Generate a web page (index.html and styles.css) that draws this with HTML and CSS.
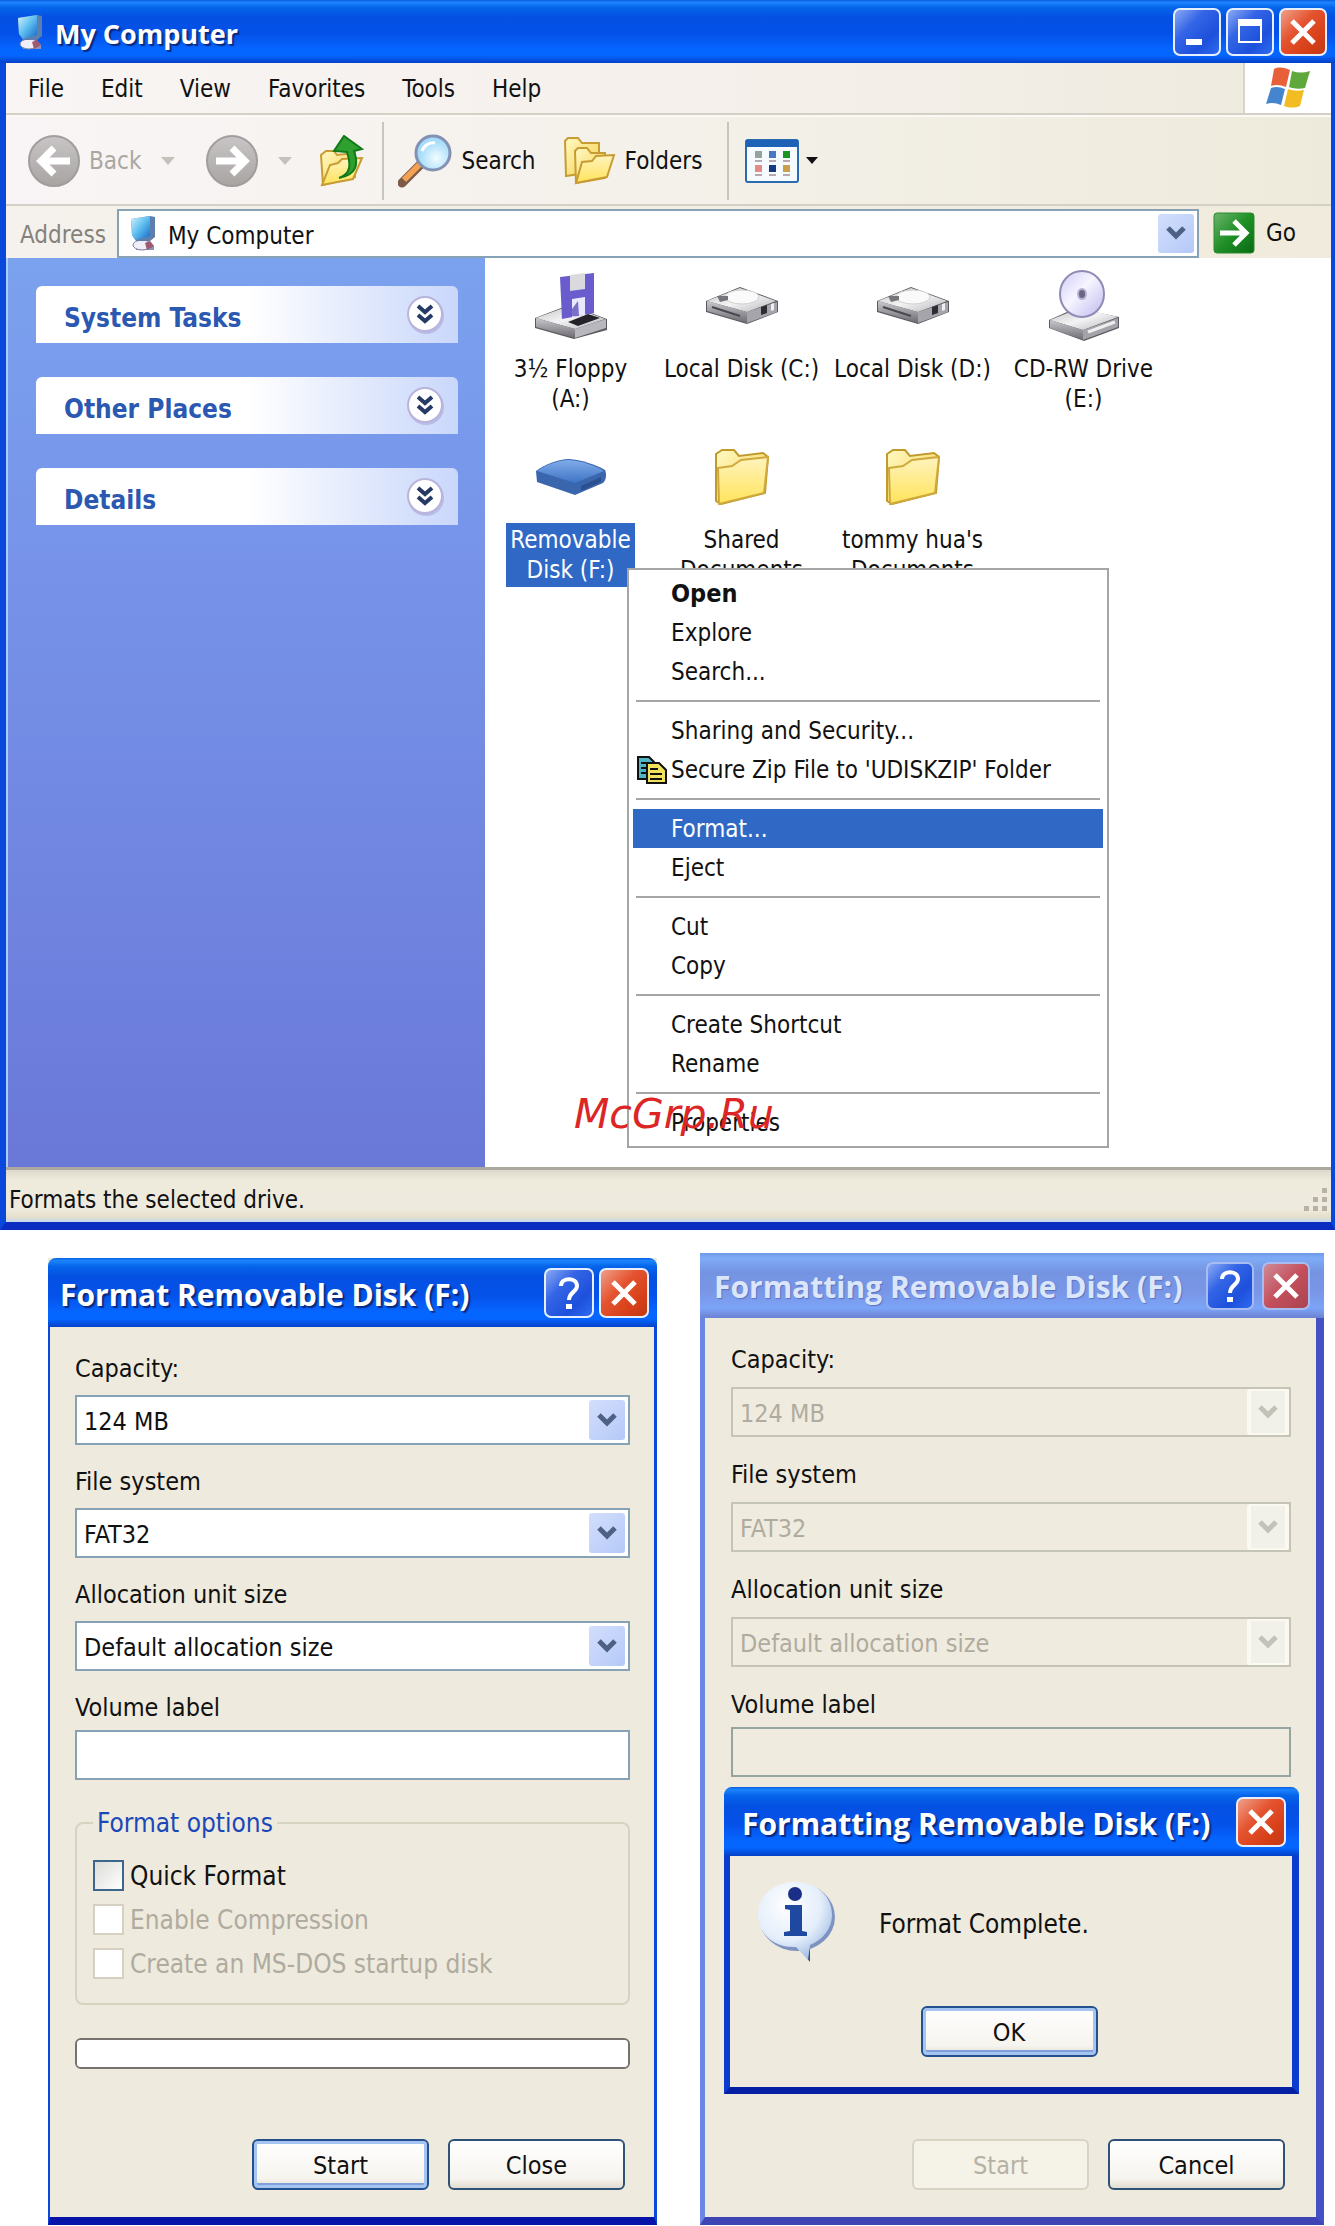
FILE: index.html
```html
<!DOCTYPE html>
<html lang="en">
<head>
<meta charset="utf-8">
<title>My Computer</title>
<meta name="viewport" content="width=device-width, initial-scale=1">
<link rel="stylesheet" href="styles.css">
</head>
<body>
<svg class="defs" width="0" height="0" aria-hidden="true">
  <defs>
    <linearGradient id="g-screen" x1="0" y1="0" x2="1" y2="1"><stop offset="0" stop-color="#d4f4fc"/><stop offset=".5" stop-color="#5cbdf0"/><stop offset="1" stop-color="#1565c4"/></linearGradient>
    <linearGradient id="g-gray" x1="0" y1="0" x2="0" y2="1"><stop offset="0" stop-color="#c9c5c6"/><stop offset="1" stop-color="#a7a4a2"/></linearGradient>
    <linearGradient id="g-folder" x1="0" y1="0" x2="1" y2="1"><stop offset="0" stop-color="#fff9c4"/><stop offset="1" stop-color="#f6cf48"/></linearGradient>
    <linearGradient id="g-front" x1="0" y1="0" x2="0" y2="1"><stop offset="0" stop-color="#fff3bd"/><stop offset="1" stop-color="#ffe45a"/></linearGradient>
    <linearGradient id="g-metal" x1="0" y1="0" x2="1" y2="1"><stop offset="0" stop-color="#c4c2c4"/><stop offset=".5" stop-color="#f4f3f4"/><stop offset="1" stop-color="#b4b2b6"/></linearGradient>
    <linearGradient id="g-side" x1="0" y1="0" x2="0" y2="1"><stop offset="0" stop-color="#c9c8cc"/><stop offset="1" stop-color="#6d6b72"/></linearGradient>
    <linearGradient id="g-go" x1="0" y1="0" x2="1" y2="1"><stop offset="0" stop-color="#6cb56c"/><stop offset=".5" stop-color="#1f8f26"/><stop offset="1" stop-color="#0a6b12"/></linearGradient>
    <radialGradient id="g-lens" cx=".6" cy=".65"><stop offset="0" stop-color="#f2fdff"/><stop offset="1" stop-color="#a5dcfa"/></radialGradient>
    <linearGradient id="g-usb" x1="0" y1="0" x2="0" y2="1"><stop offset="0" stop-color="#7fabea"/><stop offset="1" stop-color="#3f74c4"/></linearGradient>
    <radialGradient id="g-bubble" cx=".4" cy=".3" r=".75"><stop offset="0" stop-color="#fff"/><stop offset=".6" stop-color="#e4eefb"/><stop offset="1" stop-color="#9db9e0"/></radialGradient>
    <linearGradient id="g-disc" x1="0" y1="0" x2="1" y2="1"><stop offset="0" stop-color="#cfcbf5"/><stop offset=".45" stop-color="#f6f5ff"/><stop offset="1" stop-color="#bdb8ee"/></linearGradient>
    <symbol id="i-pc" viewBox="0 0 26 36">
      <path d="M7 27h13l4 4v4H6z" fill="#8d93b8"/><ellipse cx="12" cy="30" rx="9" ry="5" fill="#f0eef6" stroke="#7b80a8"/>
      <path d="M1 4 20 1l5 1v20l-5 4H6L2 20z" fill="#5d7fae"/><path d="M1 4 20 1v20L6 25 2 20z" fill="url(#g-screen)"/>
      <path d="m15 28 5-2 4 5-7 4z" fill="#a05a70"/>
    </symbol>
    <symbol id="i-chev" viewBox="0 0 20 14"><path d="m2 2 8 8 8-8" fill="none" stroke="currentColor" stroke-width="5"/></symbol>
    <symbol id="i-x" viewBox="0 0 26 26"><path d="m2 2 22 22M24 2 2 24" fill="none" stroke="#fff" stroke-width="5"/></symbol>
    <symbol id="i-q" viewBox="0 0 22 32"><path d="M3 9c0-9 16-9 16 0 0 6-8 6-8 14" fill="none" stroke="#fff" stroke-width="4"/><path d="M8 27h6v5H8z" fill="#fff"/></symbol>
    <symbol id="i-expand" viewBox="0 0 40 42">
      <circle cx="21" cy="22" r="18" fill="#a9a6d8" opacity=".6"/><circle cx="20" cy="20" r="17" fill="#fff" stroke="#b9b4dc" stroke-width="2"/>
      <path d="m13 12 7 6 7-6M13 21l7 6 7-6" fill="none" stroke="#263a66" stroke-width="4"/>
    </symbol>
    <symbol id="i-drive" viewBox="0 0 74 38">
      <path d="M1 14 35 0l38 14v11L42 37 1 25z" fill="#5c5a60"/><path d="m2 14 33-13 36 13-29 11z" fill="url(#g-metal)"/>
      <path d="m2 14 40 11v11L2 24z" fill="url(#g-side)"/><path d="m42 25 30-10v10L42 36z" fill="#a7a5ac"/>
      <ellipse cx="37" cy="10" rx="17" ry="7" fill="#fafafa" stroke="#d0d0d0"/><path d="M12 9h11v4l-8 2z" fill="#77757b"/>
      <path d="M56 20l6-2v8l-6 2z" fill="#2e2c33"/><path d="m66 17 3-1v7l-3 1z" fill="#efeff4"/><path d="m7 20 28 9" stroke="#4b4950" stroke-width="2"/>
    </symbol>
    <symbol id="i-folder" viewBox="0 0 56 56">
      <path d="M2 5 8 1h12l5 6 24-3 5 4-3 36-44 11-5-3z" fill="url(#g-folder)" stroke="#c19a2c" stroke-width="2"/>
      <path d="M4 19 18 17l9-6 27-3-4 36L5 55z" fill="url(#g-front)" stroke="#d0a93c" stroke-width="2"/>
    </symbol>
  </defs>
</svg>

<section class="window explorer" aria-label="My Computer">
  <header class="titlebar">
    <svg class="title-icon"><use href="#i-pc"/></svg>
    <h1 class="title">My Computer</h1>
    <button class="cap" aria-label="Minimize"><svg width="26" height="26" viewBox="0 0 26 26"><path d="M2 20h16v6H2z" fill="#fff"/></svg></button>
    <button class="cap" aria-label="Maximize"><svg width="26" height="26" viewBox="0 0 26 26"><path d="M2 1h22v22H2z" fill="none" stroke="#fff" stroke-width="2"/><path d="M1 0h24v7H1z" fill="#fff"/></svg></button>
    <button class="cap close" aria-label="Close"><svg width="26" height="26"><use href="#i-x"/></svg></button>
  </header>

  <nav class="menubar" aria-label="Menu">
    <button>File</button><button>Edit</button><button>View</button><button>Favorites</button><button>Tools</button><button>Help</button>
    <span class="flag">
      <svg width="44" height="42" viewBox="0 0 44 42">
        <path d="M8 2c6-3 11-1 16 1l-4 17c-5-2-10-3-15-1z" fill="#e8603a"/><path d="M26 4c6 2 12 2 18 0l-5 17c-5 1-11 1-16-1z" fill="#5fa83c"/>
        <path d="M5 21c5-2 9-1 14 1l-4 16c-5-2-9-3-15-1z" fill="#4585cf"/><path d="M22 22c5 2 10 2 16 1l-4 16c-5 2-10 2-16 0z" fill="#f2bc22"/>
      </svg>
    </span>
  </nav>

  <div class="toolbar">
    <button class="tool back" disabled>
      <svg width="52" height="52" viewBox="0 0 52 52"><circle cx="26" cy="26" r="25" fill="url(#g-gray)" stroke="#a09d9d" stroke-width="2"/><path d="M42 26H14M26 13 13 26l13 13" fill="none" stroke="#fff" stroke-width="7"/></svg>
      Back
    </button>
    <button class="drop" disabled aria-label="Back history"><svg width="14" height="8" viewBox="0 0 14 8"><path d="M0 0h14L7 8z" fill="#c5c0bb"/></svg></button>
    <button class="tool" disabled aria-label="Forward">
      <svg width="52" height="52" viewBox="0 0 52 52"><circle cx="26" cy="26" r="25" fill="url(#g-gray)" stroke="#a09d9d" stroke-width="2"/><path d="M10 26h28M26 13l13 13-13 13" fill="none" stroke="#fff" stroke-width="7"/></svg>
    </button>
    <button class="drop next" disabled aria-label="Forward history"><svg width="14" height="8" viewBox="0 0 14 8"><path d="M0 0h14L7 8z" fill="#c5c0bb"/></svg></button>
    <button class="tool up" aria-label="Up">
      <svg width="46" height="52" viewBox="0 0 46 52"><path d="M3 20 8 16h8l3 4 18-2v24L5 50z" fill="url(#g-folder)" stroke="#c79c32" stroke-width="2"/><path d="M4 50 12 30l8-2 4-4 20-1-9 21z" fill="url(#g-front)" stroke="#c79c32" stroke-width="2"/><path d="M21 43c12-4 12-14 8-26l-13-1L26 1l18 13-8 2c5 14 2 24-15 27z" fill="#2fa02f" stroke="#117a18" stroke-width="2"/></svg>
    </button>
    <span class="sep"></span>
    <button class="tool search">
      <svg width="54" height="54" viewBox="0 0 54 54"><path d="m4 49 19-19" stroke="#7d5a48" stroke-width="9" stroke-linecap="round"/><path d="m6 46 16-16" stroke="#f2a252" stroke-width="6"/><circle cx="35" cy="19" r="17" fill="url(#g-lens)" stroke="#8391b4" stroke-width="3"/><path d="M24 17c2-6 8-9 13-8" fill="none" stroke="#fff" stroke-width="3"/></svg>
      Search
    </button>
    <button class="tool folders">
      <svg width="52" height="48" viewBox="0 0 52 48"><path d="M1 4 4 1h10l4 5h17v28L2 39z" fill="url(#g-folder)" stroke="#c79c32" stroke-width="2"/><path d="M11 14l3-3h9l4 5h14v25L12 46z" fill="url(#g-folder)" stroke="#c79c32" stroke-width="2"/><path d="m12 46 6-21 10-1 4-5 18-1-7 22z" fill="url(#g-front)" stroke="#c79c32" stroke-width="2"/></svg>
      Folders
    </button>
    <span class="sep"></span>
    <button class="tool views" aria-label="Views">
      <svg width="54" height="44" viewBox="0 0 54 44"><rect x="1" y="1" width="52" height="42" rx="2" fill="#f6fbff" stroke="#2b6cb0" stroke-width="2"/><path d="M1 1h52v7H1z" fill="#1c63b7"/>
      <path d="M10 12h7v7h-7z" fill="#93a49c"/><path d="M24 12h7v7h-7z" fill="#4679c4"/><path d="M38 12h7v7h-7z" fill="#1c9420"/><path d="M10 26h7v7h-7z" fill="#e58b86"/><path d="M24 26h7v7h-7z" fill="#163a86"/><path d="M38 26h7v7h-7z" fill="#c9a046"/>
      <path d="M10 22h7M24 22h7M38 22h7M10 36h7M24 36h7M38 36h7" stroke="#b5a9ae" stroke-width="2"/></svg>
      <svg width="12" height="7" viewBox="0 0 12 7"><path d="M0 0h12L6 7z" fill="#111"/></svg>
    </button>
  </div>

  <div class="addressbar">
    <label for="address">Address</label>
    <div class="combo address">
      <svg class="combo-icon"><use href="#i-pc"/></svg>
      <select id="address"><option>My Computer</option></select>
      <span class="combo-btn"><svg width="20" height="14"><use href="#i-chev"/></svg></span>
    </div>
    <button class="go">
      <svg width="42" height="42" viewBox="0 0 42 42"><rect x="1" y="1" width="40" height="40" rx="3" fill="url(#g-go)" stroke="#2a8a2e"/><path d="M7 21h25M21 9l12 12-12 12" fill="none" stroke="#fff" stroke-width="5"/></svg>
      Go
    </button>
  </div>

  <div class="panes">
    <aside class="sidebar">
      <button class="task"><span>System Tasks</span><svg width="40" height="42"><use href="#i-expand"/></svg></button>
      <button class="task"><span>Other Places</span><svg width="40" height="42"><use href="#i-expand"/></svg></button>
      <button class="task"><span>Details</span><svg width="40" height="42"><use href="#i-expand"/></svg></button>
    </aside>
    <main class="content">
      <ul class="items">
        <li><button class="item"><span class="pic"><svg width="74" height="68" viewBox="0 0 74 68">
          <path d="M1 46 35 33l38 14v11L40 67 1 56z" fill="#5c5a60"/><path d="m2 46 33-12 36 13-30 10z" fill="url(#g-metal)"/><path d="m2 46 39 11v9L2 55z" fill="url(#g-side)"/><path d="m41 57 31-10v9L41 66z" fill="#b9b7be"/><path d="m34 50 20-8 12 4-22 8z" fill="#25232a"/>
          <path d="M26 5 60 1v40L28 47z" fill="#6a5ccc"/><path d="M36 3 51 1v16l-15 2z" fill="#dad9de"/><path d="M38 27l13-2v18l-13 2z" fill="#eae8ff"/><path d="m38 37 6-8 1 15h-7z" fill="#7b70c8"/></svg></span>
          <span class="name">3½ Floppy<br>(A:)</span></button></li>
        <li><button class="item"><span class="pic"><svg width="74" height="38"><use href="#i-drive"/></svg></span><span class="name">Local Disk (C:)</span></button></li>
        <li><button class="item"><span class="pic"><svg width="74" height="38"><use href="#i-drive"/></svg></span><span class="name">Local Disk (D:)</span></button></li>
        <li><button class="item"><span class="pic"><svg width="72" height="72" viewBox="0 0 72 72">
          <path d="M1 50 28 38l43 9v11L36 71 1 58z" fill="#5c5a60"/><path d="m2 50 30-12 38 9-35 13z" fill="url(#g-metal)"/><path d="m2 50 33 10v10L2 58z" fill="url(#g-side)"/><path d="m35 60 35-12v9L35 70z" fill="#a5a3aa"/><path d="m40 62 27-10" stroke="#eee" stroke-width="3"/>
          <ellipse cx="34" cy="24" rx="22" ry="23" fill="url(#g-disc)" stroke="#8f8bb4" stroke-width="2"/><ellipse cx="34" cy="24" rx="4" ry="5" fill="#6a6684" stroke="#b4b0d0" stroke-width="2"/></svg></span>
          <span class="name">CD-RW Drive<br>(E:)</span></button></li>
        <li><button class="item selected"><span class="pic"><svg width="72" height="38" viewBox="0 0 72 38"><path d="M1 13C10 6 24 1 34 1c12 1 26 5 36 11 2 5 1 10-2 13L40 37 2 24z" fill="#3a66ae"/><path d="M2 13C12 6 24 2 34 2c12 1 26 5 35 11L40 25z" fill="url(#g-usb)"/><path d="m46 28 20-9v5l-20 9z" fill="#2c4f90"/></svg></span>
          <span class="name">Removable<br>Disk (F:)</span></button></li>
        <li><button class="item"><span class="pic"><svg width="56" height="56"><use href="#i-folder"/></svg></span><span class="name">Shared<br>Documents</span></button></li>
        <li><button class="item"><span class="pic"><svg width="56" height="56"><use href="#i-folder"/></svg></span><span class="name">tommy hua's<br>Documents</span></button></li>
      </ul>

      <div class="context" role="menu">
        <button role="menuitem" class="default">Open</button>
        <button role="menuitem">Explore</button>
        <button role="menuitem">Search...</button>
        <hr>
        <button role="menuitem">Sharing and Security...</button>
        <button role="menuitem"><svg class="zip" width="30" height="28" viewBox="0 0 30 28"><path d="M1 1h11l5 5v17H1z" fill="#4fb4c4" stroke="#111" stroke-width="2"/><path d="M4 7h7M4 12h5M4 17h5" stroke="#111" stroke-width="2"/><path d="M10 7h12l7 7v13H10z" fill="#f0e25c" stroke="#111" stroke-width="2"/><path d="M13 13h8M13 18h12M13 23h12" stroke="#111" stroke-width="2"/></svg>Secure Zip File to 'UDISKZIP' Folder</button>
        <hr>
        <button role="menuitem" class="active">Format...</button>
        <button role="menuitem">Eject</button>
        <hr>
        <button role="menuitem">Cut</button>
        <button role="menuitem">Copy</button>
        <hr>
        <button role="menuitem">Create Shortcut</button>
        <button role="menuitem">Rename</button>
        <hr>
        <button role="menuitem">Properties</button>
      </div>
      <span class="watermark">McGrp.Ru</span>
    </main>
  </div>

  <footer class="statusbar">
    <span>Formats the selected drive.</span>
    <svg width="26" height="24" viewBox="0 0 26 24"><path d="M20 0h5v5h-5zM11 9h5v5h-5zM20 9h5v5h-5zM2 18h5v5H2zM11 18h5v5h-5zM20 18h5v5h-5z" fill="#b9b0a6"/></svg>
  </footer>
</section>

<div class="dialogs">
  <section class="window dialog" aria-label="Format Removable Disk (F:)">
    <header class="titlebar">
      <h2 class="title">Format Removable Disk (F:)</h2>
      <button class="cap" aria-label="Help"><svg width="22" height="32"><use href="#i-q"/></svg></button>
      <button class="cap close" aria-label="Close window"><svg width="26" height="26"><use href="#i-x"/></svg></button>
    </header>
    <form class="form">
      <div class="field"><label for="cap1">Capacity:</label><div class="combo"><select id="cap1"><option>124 MB</option></select><span class="combo-btn"><svg width="20" height="14"><use href="#i-chev"/></svg></span></div></div>
      <div class="field"><label for="fs1">File system</label><div class="combo"><select id="fs1"><option>FAT32</option></select><span class="combo-btn"><svg width="20" height="14"><use href="#i-chev"/></svg></span></div></div>
      <div class="field"><label for="au1">Allocation unit size</label><div class="combo"><select id="au1"><option>Default allocation size</option></select><span class="combo-btn"><svg width="20" height="14"><use href="#i-chev"/></svg></span></div></div>
      <div class="field tight"><label for="vl1">Volume label</label><input class="text" type="text" id="vl1"></div>
      <fieldset class="options">
        <legend>Format options</legend>
        <label class="check"><input type="checkbox">Quick Format</label>
        <label class="check off"><input type="checkbox" disabled>Enable Compression</label>
        <label class="check off"><input type="checkbox" disabled>Create an MS-DOS startup disk</label>
      </fieldset>
      <progress class="progress" value="0" max="100" aria-label="Format progress"></progress>
      <div class="actions"><button type="button" class="btn primary">Start</button><button type="button" class="btn">Close</button></div>
    </form>
  </section>

  <section class="window dialog inactive" aria-label="Formatting Removable Disk (F:)">
    <header class="titlebar">
      <h2 class="title">Formatting Removable Disk (F:)</h2>
      <button class="cap" aria-label="Help"><svg width="22" height="32"><use href="#i-q"/></svg></button>
      <button class="cap close" aria-label="Close window"><svg width="26" height="26"><use href="#i-x"/></svg></button>
    </header>
    <form class="form">
      <div class="field"><label for="cap2">Capacity:</label><div class="combo"><select id="cap2" disabled><option>124 MB</option></select><span class="combo-btn"><svg width="20" height="14"><use href="#i-chev"/></svg></span></div></div>
      <div class="field"><label for="fs2">File system</label><div class="combo"><select id="fs2" disabled><option>FAT32</option></select><span class="combo-btn"><svg width="20" height="14"><use href="#i-chev"/></svg></span></div></div>
      <div class="field"><label for="au2">Allocation unit size</label><div class="combo"><select id="au2" disabled><option>Default allocation size</option></select><span class="combo-btn"><svg width="20" height="14"><use href="#i-chev"/></svg></span></div></div>
      <div class="field tight"><label for="vl2">Volume label</label><input class="text" type="text" id="vl2" disabled></div>
      <div class="actions"><button type="button" class="btn" disabled>Start</button><button type="button" class="btn">Cancel</button></div>

      <div class="window message" role="alertdialog" aria-label="Format Complete">
        <header class="titlebar">
          <h3 class="title">Formatting Removable Disk (F:)</h3>
          <button type="button" class="cap close" aria-label="Close message"><svg width="26" height="26"><use href="#i-x"/></svg></button>
        </header>
        <div class="message-body">
          <div class="message-row">
            <svg width="80" height="82" viewBox="0 0 80 82"><path d="M42 66 54 64v17z" fill="#3a4d86"/><ellipse cx="41" cy="36" rx="38" ry="34" fill="#7e93c2"/><path d="M39 1c22 0 37 14 37 33 0 13-9 25-22 30l-2 15-12-13C18 67 2 53 2 34 2 15 17 1 39 1z" fill="url(#g-bubble)"/><circle cx="39" cy="13" r="7" fill="#1c2f86"/><path d="M29 24h17v26l5 1v4H28v-4l6-1V29l-5-1z" fill="#1f48a0"/></svg>
            <p>Format Complete.</p>
          </div>
          <button type="button" class="btn primary">OK</button>
        </div>
      </div>
    </form>
  </section>
</div>
</body>
</html>
```
FILE: styles.css
```css
:root {
  --ui: "DejaVu Sans Condensed", "DejaVu Sans", sans-serif;
  --caption: "Open Sans", "Noto Sans", sans-serif;
  --face: #eeeadd;
  --select: #2f69c5;
}
* { box-sizing: border-box; }
body { margin: 0; background: #fff; color: #111; font: 24px/28px var(--ui); }
button, select, input { font: inherit; color: inherit; }
button { background: none; border: 0; padding: 0; }
svg { display: block; flex: none; }
.defs { position: absolute; }
h1, h2, h3, p, ul { margin: 0; padding: 0; }

/* Window frame */
.window { background: var(--face); }
.titlebar {
  display: flex; align-items: center; gap: 5px;
  height: 69px; padding: 0 8px 0 12px;
  background: linear-gradient(#0a5fe0 0, #1c84ff 4%, #0565ea 12%, #0450e2 28%, #0552ea 55%, #0566ff 78%, #0566ff 88%, #0340c8 100%);
  border-radius: 8px 8px 0 0;
}
.title {
  flex: 1; min-width: 0; padding-top: 4px; font: 700 30px/40px var(--caption); color: #fff;
  text-shadow: 2px 2px 1px #0a2a80; white-space: nowrap;
}
.cap {
  flex: none; display: grid; place-items: center; width: 50px; height: 50px;
  border: 2px solid #e6efff; border-radius: 7px;
  background: linear-gradient(135deg, #8aa9f4 0, #3465e6 35%, #1d50dc 70%, #2e6cf0 100%);
}
.cap.close { background: linear-gradient(135deg, #f0a08a 0, #e4532f 40%, #d63f18 75%, #bf3a16 100%); }

/* Explorer */
.explorer { border: solid #0a48dc; border-width: 0 4px 8px 6px; border-bottom-color: #0a2cc0; }
.explorer > .titlebar { height: 63px; margin: 0 -4px 0 -6px; padding: 0 8px 0 17px; border-radius: 0; }
.explorer > .titlebar .title { font-size: 27px; }
.explorer > .titlebar .cap { width: 48px; height: 48px; }
.title-icon { width: 26px; height: 36px; margin-right: 7px; }
.menubar {
  display: flex; align-items: center; height: 52px; padding-left: 22px; gap: 37px;
  background: linear-gradient(90deg, #f8f5f4, #f5efea 60%, #edeadd);
  border-bottom: 2px solid #d5d0c6;
}
.menubar button { padding-top: 2px; }
.flag { margin-left: auto; align-self: stretch; width: 88px; background: #fff; border-left: 2px solid #d8d4cb; display: grid; place-items: center; }
.toolbar {
  display: flex; align-items: center; height: 91px; padding-left: 22px;
  background: linear-gradient(90deg, #f9f5f6, #f4f1ea 50%, #eeeadb);
  border-top: 2px solid #fbf9f4; border-bottom: 2px solid #d5d0c6;
}
.tool { display: flex; align-items: center; gap: 9px; }
.tool:disabled { color: #aaa7a2; }
.drop { margin: 0 31px 0 20px; }
.drop.next { margin: 0 26px 0 20px; }
.sep { width: 2px; height: 78px; background: #c9c5bd; margin: 0 14px 0 18px; }
.search { margin-right: 28px; }
.folders + .sep { margin-left: 25px; margin-right: 16px; }
.views { gap: 7px; }
.addressbar {
  display: flex; align-items: center; height: 52px; padding: 2px 35px 0 14px;
  background: linear-gradient(90deg, #f5f1ec, #f0ebdc);
}
.addressbar label { color: #84817c; margin-right: 11px; padding-top: 4px; }
.go { display: flex; align-items: center; gap: 11px; margin-left: 14px; }
.panes { display: flex; min-height: 912px; background: #fff; border-bottom: 3px solid #aaa89f; }
.sidebar {
  flex: 0 0 479px; padding: 28px 27px 0 28px; display: flex; flex-direction: column; gap: 34px;
  border-left: 2px solid #a9cdf4;
  background: linear-gradient(#7ba2ee, #7795ea 30%, #6a78d8);
}
.task {
  display: flex; align-items: center; justify-content: space-between; height: 57px; padding: 0 13px 0 28px;
  font-size: 26px; font-weight: 700; color: #2b58b0; text-align: left;
  background: linear-gradient(90deg, #fff 50%, #c9d7fb); border-radius: 6px 6px 0 0;
}
.task span { padding-top: 6px; }
.content { flex: 1; position: relative; }
.items { list-style: none; display: flex; flex-wrap: wrap; padding-top: 6px; width: 700px; }
.items li { width: 171px; height: 171px; }
.item { width: 171px; display: flex; flex-direction: column; align-items: center; gap: 4px; }
.pic { height: 84px; display: grid; place-items: center; }
.name { line-height: 30px; padding: 2px 4px; white-space: nowrap; }
.selected .name { background: var(--select); color: #fff; }

/* Context menu */
.context {
  position: absolute; left: 142px; top: 310px; width: 482px; padding: 4px;
  background: #fff; border: 2px solid #a5a5a3; display: flex; flex-direction: column;
}
.context button { position: relative; height: 39px; padding-left: 38px; text-align: left; white-space: nowrap; }
.context .default { font-size: 25px; font-weight: 700; }
.context .active { background: var(--select); color: #fff; }
.context hr { width: auto; height: 2px; margin: 9px 3px; border: 0; background: #a5a5a3; align-self: stretch; }
.zip { position: absolute; left: 4px; top: 6px; }
.watermark { position: absolute; left: 89px; top: 832px; font: italic 41px/48px "DejaVu Sans", sans-serif; color: #dc2626; }
.statusbar {
  display: flex; align-items: center; justify-content: space-between; height: 52px; padding: 8px 3px 0;
  background: linear-gradient(#dedacb, #eeebdc 20%, #eeebdf 75%, #e6dfca 90%, #c4d8f0);
}

/* Combo boxes and text inputs */
.combo { display: flex; position: relative; height: 50px; }
.combo select {
  flex: 1; min-width: 0; appearance: none; border: 2px solid #86a2b4; border-radius: 0;
  background: #fff; padding: 3px 48px 0 7px; opacity: 1;
}
.combo-btn {
  position: absolute; right: 5px; top: 5px; bottom: 5px; width: 36px; pointer-events: none;
  display: grid; place-items: center; color: #4d6185; border-radius: 3px;
  background: linear-gradient(135deg, #d3defc, #b5c9f8);
}
.address { flex: 1; height: 49px; }
.address select { padding: 6px 48px 0 49px; }
.combo-icon { position: absolute; left: 13px; top: 6px; width: 26px; height: 36px; }
.combo select:disabled { background: #efebdf; border-color: #c4c5b6; color: #b0ab9f; }
.combo select:disabled + .combo-btn { right: 2px; top: 2px; bottom: 2px; width: 42px; background: #f1f0e9; border: solid #fbf9f0; border-width: 2px 4px; color: #c3c2b8; }
.text { height: 50px; width: 100%; border: 2px solid #86a2b4; border-radius: 0; background: #fff; padding: 0 7px; }
.text:disabled { background: #f0ebdf; border-color: #96a5a2; }

/* Dialogs */
.dialogs { display: grid; grid-template-columns: 609fr 624fr; gap: 43px; padding: 23px 11px 0 48px; font-size: 25px; }
.dialog { display: flex; flex-direction: column; margin-top: 5px; min-width: 0; }
.form {
  flex: 1; position: relative; display: flex; flex-direction: column;
  border: solid #0a48dc; border-width: 0 3px 8px 2px; border-bottom-color: #0615a8;
  padding: 28px 24px 27px 25px;
}
.field { display: flex; flex-direction: column; gap: 12px; margin-bottom: 23px; }
.field.tight { gap: 8px; margin-bottom: 29px; }
.options {
  margin: 0; padding: 23px 16px 24px; border: 2px solid #d8d3c1; border-radius: 8px;
  display: flex; flex-direction: column; gap: 13px; font-size: 26px;
}
.options legend { padding: 0 4px; color: #1a48b8; line-height: 28px; }
.check { display: flex; align-items: center; gap: 6px; height: 31px; white-space: nowrap; }
.check.off { color: #b0ab9f; }
.check input { appearance: none; flex: none; margin: 0; width: 31px; height: 31px; border: 2px solid #3d668c; background: linear-gradient(135deg, #dcdcd8, #fff); }
.check.off input { border-color: #d6d0c2; background: #fff; }
.progress {
  appearance: none; width: 100%; height: 31px; margin-top: 33px;
  border: 2px solid #76726e; border-radius: 6px; background: #fff; overflow: hidden;
}
.progress::-webkit-progress-bar { background: #fff; }
.actions { display: flex; justify-content: flex-end; gap: 19px; margin-top: 70px; padding-right: 5px; }
.btn {
  width: 177px; height: 51px; padding-top: 2px; border: 2px solid #2f5378; border-radius: 6px;
  background: linear-gradient(#fff, #f6f4ee 80%, #e2ddd0); white-space: nowrap;
}
.btn.primary { border-color: #23508f; box-shadow: inset 0 0 0 3px #a6c4f2, inset 0 -5px 0 #7f9fdc; }
.btn:disabled { border-color: #d8d4c4; background: #f5f2e8; color: #b5b1a6; }

.inactive { margin-top: 0; }
.inactive > .titlebar { height: 65px; padding: 0 14px; border-radius: 0; background: linear-gradient(#6f9ae8, #7fabf6 8%, #7494e2 30%, #7a96e6 60%, #7ba4f8 85%, #6d80d0); gap: 8px; }
.inactive > .titlebar .title { color: #dbe6fb; padding-top: 2px; text-shadow: 1px 1px 1px #5a72c0; }
.inactive > .titlebar .cap { width: 48px; height: 48px; border-color: #a9bcf2; }
.inactive > .titlebar .close { background: linear-gradient(135deg, #cf8a98, #c4505c 50%, #a84450); }
.inactive > .form { border-color: #6b86e4 #4450c4 #3f44b4 #6b86e4; border-width: 0 8px 8px 5px; padding: 28px 25px 27px 26px; }
.inactive .field { gap: 13px; margin-bottom: 24px; }
.inactive .field.tight { gap: 8px; }
.inactive .actions { margin-top: auto; padding-right: 6px; }

.message {
  position: absolute; left: 19px; right: 17px; top: 469px; border-radius: 10px 10px 0 0;
  border: solid #0a3cd0; border-width: 0 7px 7px 6px; border-bottom-color: #0620a4;
}
.message > .titlebar { margin: 0 -7px 0 -6px; padding: 0 13px 0 18px; }
.message-body { display: flex; flex-direction: column; align-items: center; gap: 43px; padding: 25px 30px 30px 26px; }
.message-row { align-self: stretch; display: flex; align-items: center; gap: 43px; }
.message-row p { padding-top: 4px; font-size: 26px; }
```
